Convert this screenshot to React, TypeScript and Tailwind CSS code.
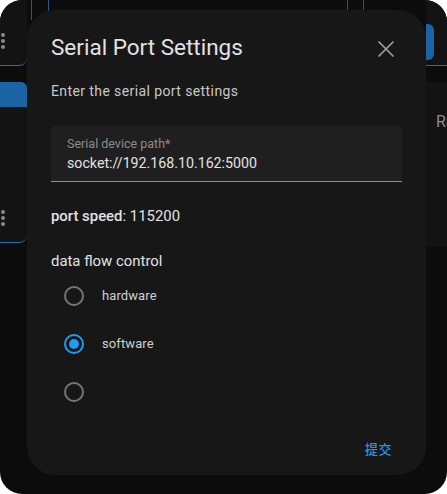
import React, { useState } from 'react';
import { X } from 'lucide-react';

const Dots: React.FC = () => (
  <div className="flex flex-col gap-[2px] pl-[1px]">
    <span className="w-[4px] h-[4px] rounded-full bg-[#8a8a8a]" />
    <span className="w-[4px] h-[4px] rounded-full bg-[#8a8a8a]" />
    <span className="w-[4px] h-[4px] rounded-full bg-[#8a8a8a]" />
  </div>
);

const Radio: React.FC<{ checked: boolean; label: string; onClick: () => void }> = ({ checked, label, onClick }) => (
  <div className="h-12 flex items-center cursor-pointer" onClick={onClick}>
    <div className="w-10 h-10 flex items-center justify-center">
      <div
        className={`w-5 h-5 rounded-full border-2 flex items-center justify-center ${
          checked ? 'border-[#1e9cf0]' : 'border-[#757575]'
        }`}
      >
        {checked && <div className="w-[10px] h-[10px] rounded-full bg-[#1e9cf0]" />}
      </div>
    </div>
    <span className="ml-2 text-[13px] tracking-[0.1px] text-[#cfcfcf]">{label}</span>
  </div>
);

const App: React.FC = () => {
  const [flow, setFlow] = useState('software');

  return (
    <div className="w-[447px] h-[494px] bg-white" style={{ fontFamily: 'Roboto, "Noto Sans CJK SC", sans-serif' }}>
      <div className="relative w-full h-full rounded-[22px] bg-[#0c0c0c] overflow-hidden flex">
        {/* page behind the dialog */}
        <div className="w-[27px] flex flex-col">
          <div className="h-[66px] bg-[#131313] border-b border-[#1d6fb0] rounded-br-[8px] flex items-center pt-[16px]">
            <Dots />
          </div>
          <div className="h-[16px]" />
          <div className="h-[25px] bg-[#1b64a3] rounded-tr-[6px]" />
          <div className="h-[136px] bg-[#131313] border-b border-[#1d6fb0] rounded-br-[8px] flex items-end pb-[16px]">
            <Dots />
          </div>
        </div>
        <div className="flex-1 flex justify-between px-[4px]">
          <div className="w-[18px] h-[20px] border-x border-[#1d5a8f] bg-[#0c0c0c]" />
          <div className="w-[17px] h-[20px] border-x border-[#1d5a8f] bg-[#0c0c0c] mr-[58px]" />
        </div>
        <div className="w-[21px] flex flex-col">
          <div className="h-[66px] bg-[#131313] border-b border-[#1d6fb0] pt-[24px]">
            <div className="w-[8px] h-[36px] bg-[#1b64a3] rounded-r-[6px]" />
          </div>
          <div className="h-[16px]" />
          <div className="h-[165px] bg-[#131313] pl-[10px] pt-[28px] text-base text-[#8c8c8c] overflow-hidden whitespace-nowrap">
            Ra
          </div>
        </div>

        {/* dialog */}
        <div className="absolute left-[27px] top-[10px] w-[399px] h-[465px] rounded-[28px] bg-[#171717] px-6 pt-[21px] flex flex-col">
          <div className="flex items-center justify-between">
            <h2 className="text-[22.5px] leading-8 text-[#e2e2e2]">Serial Port Settings</h2>
            <X size={28} strokeWidth={1.5} className="text-[#9e9e9e] mr-[2px] mt-[3px]" />
          </div>
          <p className="mt-[18px] text-sm leading-5 tracking-[0.4px] text-[#c8c8c8]">Enter the serial port settings</p>

          <div className="mt-[25px] h-[56px] bg-[#1f1f1f] rounded-t-[4px] border-b border-[#8e8e8e] px-4 pt-[10px]">
            <div className="text-[12.5px] leading-4 text-[#8c8c8c]">Serial device path*</div>
            <div className="text-[14.2px] leading-5 text-[#e2e2e2] mt-[1px]">socket://192.168.10.162:5000</div>
          </div>

          <div className="mt-[22px] text-[14.9px] leading-6 text-[#e2e2e2]">
            <span className="font-medium">port speed</span>: 115200
          </div>

          <div className="mt-[21px] text-[14.9px] leading-6 text-[#e2e2e2]">data flow control</div>

          <div className="ml-[3px] -mt-[1px] flex flex-col">
            <Radio checked={flow === 'hardware'} label="hardware" onClick={() => setFlow('hardware')} />
            <Radio checked={flow === 'software'} label="software" onClick={() => setFlow('software')} />
            <Radio checked={flow === 'none'} label="" onClick={() => setFlow('none')} />
          </div>

          <div className="mt-auto mb-[5px] flex justify-end">
            <button className="pl-3 pr-[10px] h-10 text-[13px] font-medium text-[#2196f3] tracking-[0.5px]">提交</button>
          </div>
        </div>
      </div>
    </div>
  );
};

export default App;
